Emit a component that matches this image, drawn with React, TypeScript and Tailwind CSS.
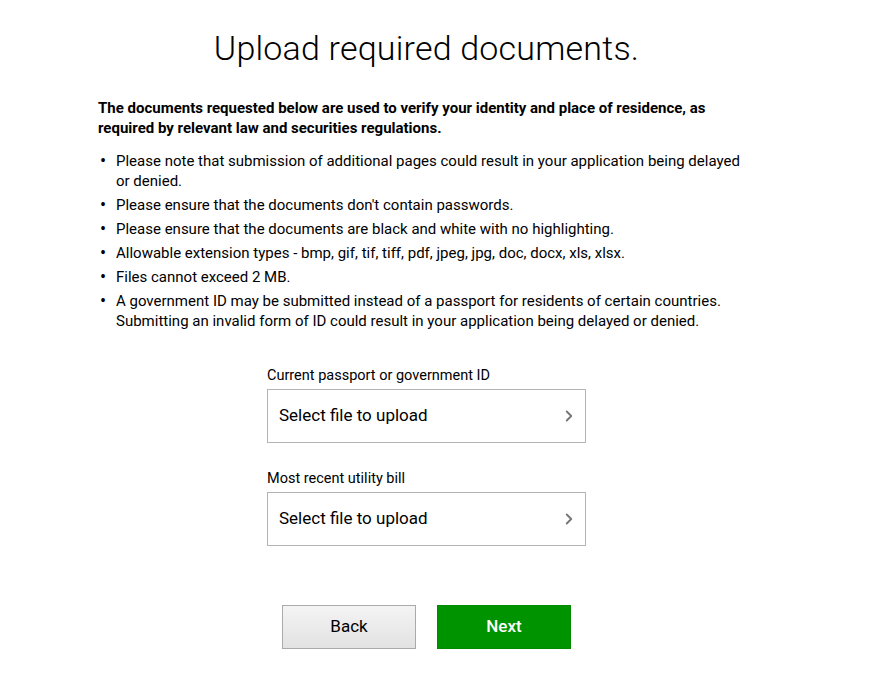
import { ChevronRight } from 'lucide-react';

const notes = [
  'Please note that submission of additional pages could result in your application being delayed or denied.',
  "Please ensure that the documents don't contain passwords.",
  'Please ensure that the documents are black and white with no highlighting.',
  'Allowable extension types - bmp, gif, tif, tiff, pdf, jpeg, jpg, doc, docx, xls, xlsx.',
  'Files cannot exceed 2 MB.',
  'A government ID may be submitted instead of a passport for residents of certain countries. Submitting an invalid form of ID could result in your application being delayed or denied.',
];

const FileField = ({ label }: { label: string }) => (
  <div>
    <div className="text-[14.5px] leading-5 text-black mb-[3px]">{label}</div>
    <button className="w-[319px] h-[54px] border border-[#b3b3b3] bg-white flex items-center justify-between pl-[11px] pr-[7px] text-[17px] text-black">
      <span>Select file to upload</span>
      <ChevronRight size={18} strokeWidth={2.5} className="text-[#777]" />
    </button>
  </div>
);

export default function App() {
  return (
    <div className="w-[872px] min-h-[682px] bg-white text-black font-['Roboto',sans-serif]">
      <h1 className="pt-[26px] pr-[19px] text-center text-[34px] leading-[44px] font-light tracking-[0.2px]">
        Upload required documents.
      </h1>

      <div className="ml-[98px] w-[650px] mt-[28px]">
        <p className="text-[15px] leading-5 font-bold">
          The documents requested below are used to verify your identity and place of residence, as
          required by relevant law and securities regulations.
        </p>
        <ul className="mt-[13px] flex flex-col gap-1 text-[15px] leading-5">
          {notes.map((n, i) => (
            <li key={i} className="flex">
              <span className="w-[18px] pl-[2px] shrink-0 text-[18px] leading-5">•</span>
              <span>{n}</span>
            </li>
          ))}
        </ul>
      </div>

      <div className="ml-[267px] mt-[35px] flex flex-col gap-[26px]">
        <FileField label="Current passport or government ID" />
        <FileField label="Most recent utility bill" />
      </div>

      <div className="ml-[282px] mt-[59px] flex gap-[21px]">
        <button className="w-[134px] h-[44px] border border-[#aaa] bg-gradient-to-b from-[#f4f4f4] to-[#e2e2e2] text-[17px] text-black">
          Back
        </button>
        <button className="w-[134px] h-[44px] border border-[#008a00] bg-[#009300] text-[17px] font-medium text-white">
          Next
        </button>
      </div>
    </div>
  );
}
